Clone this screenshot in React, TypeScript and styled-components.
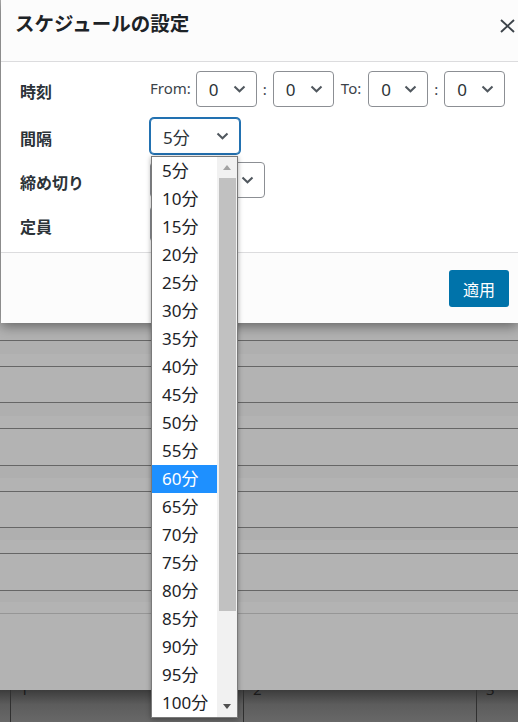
import React from "react";
import styled, { createGlobalStyle } from "styled-components";

const GlobalStyle = createGlobalStyle`
  html, body {
    margin: 0;
    padding: 0;
  }
  body {
    font-family: "Segoe UI", "Noto Sans", "Noto Sans CJK JP", sans-serif;
    background: #b2b2b2;
    overflow: hidden;
  }
  * {
    box-sizing: border-box;
  }
`;

const intervals = [5, 10, 15, 20, 25, 30, 35, 40, 45, 50, 55, 60, 65, 70, 75, 80, 85, 90, 95, 100];

const backRows = [
  { h: 26, split: true },
  { h: 36, split: false },
  { h: 26, split: true },
  { h: 37, split: false },
  { h: 26, split: true },
  { h: 36, split: false },
  { h: 26, split: true },
  { h: 37, split: false },
  { h: 23, split: true },
];

const Chevron = () => (
  <svg width="13" height="8" viewBox="0 0 13 8">
    <path d="M1.5 1.5 L6.5 6.3 L11.5 1.5" fill="none" stroke="#50575e" strokeWidth="2" />
  </svg>
);

const App = () => {
  return (
    <Page>
      <GlobalStyle />
      <Modal>
        <ModalHeader>
          <Title>スケジュールの設定</Title>
          <CloseButton aria-label="close">
            <svg width="15" height="14" viewBox="0 0 15 14">
              <path d="M1 1 L14 13 M14 1 L1 13" stroke="#3c434a" strokeWidth="1.9" />
            </svg>
          </CloseButton>
        </ModalHeader>

        <ModalBody>
          <FieldRow $gap={11}>
            <FieldLabel>時刻</FieldLabel>
            <Controls>
              <InlineText $ml={0} $mr={5}>From:</InlineText>
              <SelectBox $w={61}>
                <span>0</span>
                <Chevron />
              </SelectBox>
              <Colon>:</Colon>
              <SelectBox $w={61}>
                <span>0</span>
                <Chevron />
              </SelectBox>
              <InlineText $ml={7} $mr={7}>To:</InlineText>
              <SelectBox $w={60}>
                <span>0</span>
                <Chevron />
              </SelectBox>
              <Colon>:</Colon>
              <SelectBox $w={61}>
                <span>0</span>
                <Chevron />
              </SelectBox>
            </Controls>
          </FieldRow>

          <FieldRow $gap={8}>
            <FieldLabel>間隔</FieldLabel>
            <Controls>
              <SelectBox $w={90} $focused>
                <span>5分</span>
                <Chevron />
              </SelectBox>
              <Dropdown>
                <OptionList>
                  {intervals.map((m) => (
                    <Option key={m} $selected={m === 60}>
                      {m}分
                    </Option>
                  ))}
                </OptionList>
                <ScrollBar>
                  <ScrollArrow>
                    <Triangle $up $color="#a3a3a3" />
                  </ScrollArrow>
                  <ScrollThumb />
                  <ScrollFill />
                  <ScrollArrow>
                    <Triangle $color="#505050" />
                  </ScrollArrow>
                </ScrollBar>
              </Dropdown>
            </Controls>
          </FieldRow>

          <FieldRow $gap={8}>
            <FieldLabel>締め切り</FieldLabel>
            <Controls>
              <SelectBox $w={115}>
                <span />
                <Chevron />
              </SelectBox>
            </Controls>
          </FieldRow>

          <FieldRow $gap={0}>
            <FieldLabel>定員</FieldLabel>
            <Controls>
              <SelectBox $w={80}>
                <span />
                <Chevron />
              </SelectBox>
            </Controls>
          </FieldRow>
        </ModalBody>

        <ModalFooter>
          <ApplyButton>適用</ApplyButton>
        </ModalFooter>
      </Modal>

      <Backdrop>
        <BackSpacer />
        {backRows.map((r, i) => (
          <BackRow key={i} $h={r.h} $split={r.split} />
        ))}
        <BackRow $h={77} $split={false} $light />
      </Backdrop>

      <CalendarStrip>
        <DayCell />
        <DayCell $divider>
          <DayNum>1</DayNum>
        </DayCell>
        <DayCell $divider>
          <DayNum>2</DayNum>
        </DayCell>
        <DayCell $divider>
          <DayNum>3</DayNum>
        </DayCell>
      </CalendarStrip>
    </Page>
  );
};

export default App;

const Page = styled.div`
  display: flex;
  flex-direction: column;
  width: 518px;
  height: 722px;
  background: #b2b2b2;
  overflow: hidden;
`;

const Modal = styled.div`
  position: relative;
  z-index: 2;
  display: flex;
  flex-direction: column;
  height: 323px;
  margin-left: 1px;
  background: #fff;
  box-shadow: 0 3px 12px rgba(0, 0, 0, 0.45);
`;

const ModalHeader = styled.div`
  display: flex;
  justify-content: space-between;
  align-items: flex-start;
  height: 62px;
  padding: 10px 3px 0 14px;
  background: #fcfcfc;
  border-bottom: 1px solid #dcdcde;
`;

const Title = styled.h1`
  margin: 0;
  font-size: 19.5px;
  font-weight: 700;
  line-height: 28px;
  color: #1d2327;
`;

const CloseButton = styled.button`
  display: flex;
  margin-top: 9px;
  padding: 0;
  border: none;
  background: none;
`;

const ModalBody = styled.div`
  display: flex;
  flex-direction: column;
  height: 190px;
  padding: 9px 0 0 19px;
  background: #fff;
`;

const FieldRow = styled.div<{ $gap: number }>`
  display: flex;
  align-items: center;
  height: 36px;
  margin-bottom: ${(p) => p.$gap}px;
`;

const FieldLabel = styled.div`
  width: 130px;
  padding-top: 4px;
  font-size: 16px;
  font-weight: 700;
  color: #2c3338;
`;

const Controls = styled.div`
  position: relative;
  display: flex;
  align-items: center;
  height: 36px;
`;

const InlineText = styled.span<{ $ml: number; $mr: number }>`
  align-self: flex-start;
  margin: 0 ${(p) => p.$mr}px 0 ${(p) => p.$ml}px;
  padding-top: 7px;
  font-size: 15px;
  color: #3c434a;
`;

const Colon = styled.span`
  margin: 0 6px;
  font-size: 15px;
  color: #3c434a;
`;

const SelectBox = styled.div<{ $w: number; $focused?: boolean }>`
  display: flex;
  align-items: center;
  justify-content: space-between;
  width: ${(p) => p.$w}px;
  height: 36px;
  padding: 0 10px 0 12px;
  border: 1px solid ${(p) => (p.$focused ? "#2271b1" : "#8c8f94")};
  border-radius: 4px;
  box-shadow: ${(p) => (p.$focused ? "0 0 0 1px #2271b1" : "none")};
  background: #fff;
  font-size: 17px;
  color: #2c3338;
`;

const Dropdown = styled.div`
  position: absolute;
  top: 38px;
  left: 1px;
  z-index: 5;
  display: flex;
  width: 87px;
  height: 562px;
  border: 1px solid #7a7a7a;
  background: #fff;
  box-shadow: 0 1px 5px rgba(0, 0, 0, 0.35);
`;

const OptionList = styled.div`
  flex: 1;
  display: flex;
  flex-direction: column;
`;

const Option = styled.div<{ $selected?: boolean }>`
  height: 28px;
  padding-left: 10px;
  line-height: 28px;
  font-size: 17px;
  color: ${(p) => (p.$selected ? "#fff" : "#1d2327")};
  background: ${(p) => (p.$selected ? "#1e90ff" : "transparent")};
  white-space: nowrap;
`;

const ScrollBar = styled.div`
  display: flex;
  flex-direction: column;
  width: 20px;
  background: #f1f1f1;
`;

const ScrollArrow = styled.div`
  display: flex;
  align-items: center;
  justify-content: center;
  height: 21px;
`;

const Triangle = styled.div<{ $up?: boolean; $color: string }>`
  width: 0;
  height: 0;
  border-left: 4.5px solid transparent;
  border-right: 4.5px solid transparent;
  border-${(p) => (p.$up ? "bottom" : "top")}: 5px solid ${(p) => p.$color};
`;

const ScrollThumb = styled.div`
  height: 433px;
  margin: 0 1px 0 2px;
  background: #c1c1c1;
`;

const ScrollFill = styled.div`
  flex: 1;
`;

const ModalFooter = styled.div`
  flex: 1;
  display: flex;
  justify-content: flex-end;
  align-items: flex-start;
  padding: 17px 9px 0 0;
  background: #fcfcfc;
  border-top: 1px solid #dcdcde;
`;

const ApplyButton = styled.button`
  width: 60px;
  height: 37px;
  border: none;
  border-radius: 3px;
  background: #0073aa;
  color: #fff;
  font-family: inherit;
  font-size: 16px;
`;

const Backdrop = styled.div`
  display: flex;
  flex-direction: column;
  height: 367px;
  background: #b2b2b2;
`;

const BackSpacer = styled.div`
  height: 17px;
`;

const BackRow = styled.div<{ $h: number; $split: boolean; $light?: boolean }>`
  height: ${(p) => p.$h}px;
  border-top: 1px solid ${(p) => (p.$light ? "#969696" : "#666")};
  background: ${(p) =>
    p.$split ? "linear-gradient(#afafaf 0 50%, #b3b3b3 50%)" : "#b3b3b3"};
`;

const CalendarStrip = styled.div`
  display: grid;
  grid-template-columns: 10px 233px 233px 1fr;
  height: 32px;
  background: linear-gradient(#3c3c3c, #5c5c5c 45%, #686868);
`;

const DayCell = styled.div<{ $divider?: boolean }>`
  overflow: hidden;
  border-left: ${(p) => (p.$divider ? "1px solid #303030" : "none")};
`;

const DayNum = styled.div`
  margin-top: -8px;
  padding-left: 9px;
  font-size: 15px;
  line-height: 1;
  color: #1a1a1a;
`;
